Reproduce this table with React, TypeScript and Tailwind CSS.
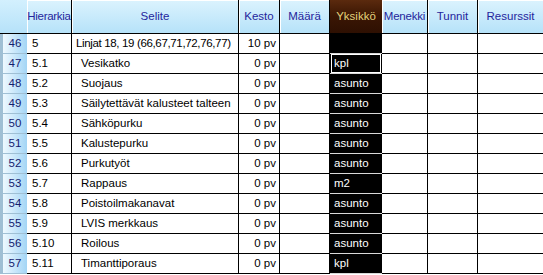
import React from "react";

type Row = {
  n: number;
  h: string;
  s: string;
  k: string;
  y: string;
  top?: boolean;
  sel?: boolean;
};

const rows: Row[] = [
  { n: 46, h: "5", s: "Linjat 18, 19 (66,67,71,72,76,77)", k: "10 pv", y: "", top: true },
  { n: 47, h: "5.1", s: "Vesikatko", k: "0 pv", y: "kpl", sel: true },
  { n: 48, h: "5.2", s: "Suojaus", k: "0 pv", y: "asunto" },
  { n: 49, h: "5.3", s: "Säilytettävät kalusteet talteen", k: "0 pv", y: "asunto" },
  { n: 50, h: "5.4", s: "Sähköpurku", k: "0 pv", y: "asunto" },
  { n: 51, h: "5.5", s: "Kalustepurku", k: "0 pv", y: "asunto" },
  { n: 52, h: "5.6", s: "Purkutyöt", k: "0 pv", y: "asunto" },
  { n: 53, h: "5.7", s: "Rappaus", k: "0 pv", y: "m2" },
  { n: 54, h: "5.8", s: "Poistoilmakanavat", k: "0 pv", y: "asunto" },
  { n: 55, h: "5.9", s: "LVIS merkkaus", k: "0 pv", y: "asunto" },
  { n: 56, h: "5.10", s: "Roilous", k: "0 pv", y: "asunto" },
  { n: 57, h: "5.11", s: "Timanttiporaus", k: "0 pv", y: "kpl" },
];

const head =
  "h-full flex items-center justify-center border-r border-black bg-gradient-to-b from-[#dbf3fe] to-[#b6e2f9] text-[#25259c] shadow-[inset_1px_1px_0_#ffffff]";
const cell = "h-[20px] flex items-center border-r border-b border-black bg-white";

const App = () => {
  return (
    <div className="w-[543px] h-[275px] overflow-hidden bg-white font-['Liberation_Sans',Arial,sans-serif] text-[11.5px] text-black">
      {/* Header */}
      <div className="flex h-[34px] border-b border-black">
        <div className="w-[27px] h-full bg-gradient-to-b from-[#d3f0fe] to-[#b6e2f9]" />
        <div className={`w-[45px] tracking-[-0.3px] ${head}`}>Hierarkia</div>
        <div className={`w-[167px] ${head}`}>Selite</div>
        <div className={`w-[41px] ${head}`}>Kesto</div>
        <div className={`w-[50px] ${head}`}>Määrä</div>
        <div className="w-[52px] h-full flex items-center justify-center bg-gradient-to-b from-[#5b2a0e] via-[#3a1604] to-[#2e1002] text-[#e3d27c]">
          Yksikkö
        </div>
        <div className={`w-[46px] tracking-[-0.2px] ${head}`}>Menekki</div>
        <div className={`w-[50px] ${head}`}>Tunnit</div>
        <div className={`w-[65px] ${head} border-r-0`}>Resurssit</div>
      </div>

      {/* Rows */}
      {rows.map((r) => (
        <div key={r.n} className="flex">
          <div className="w-[27px] h-[20px] bg-[#9fbfd4] pl-[3px] pb-px">
            <div className="h-full flex items-center justify-center bg-gradient-to-r from-[#eef9ff] to-[#a3d5f5] text-[#14206e]">
              {r.n}
            </div>
          </div>
          <div className={`w-[45px] pl-[5px] ${cell}`}>{r.h}</div>
          <div
            className={`w-[167px] ${cell} ${r.top ? "pl-[4px] tracking-[-0.35px]" : "pl-[9px]"}`}
          >
            {r.s}
          </div>
          <div className={`w-[41px] justify-end pr-[3px] ${cell}`}>{r.k}</div>
          <div className={`w-[50px] ${cell}`} />
          <div className="w-[52px] h-[20px] bg-black border-b border-[#d8d8d8] text-white">
            {r.sel ? (
              <div className="h-full mx-px border border-white flex items-center pl-[2px]">{r.y}</div>
            ) : (
              <div className="h-full flex items-center pl-[4px]">{r.y}</div>
            )}
          </div>
          <div className={`w-[46px] ${cell}`} />
          <div className={`w-[50px] ${cell}`} />
          <div className={`w-[65px] ${cell} border-r-0`} />
        </div>
      ))}
    </div>
  );
};

export default App;
